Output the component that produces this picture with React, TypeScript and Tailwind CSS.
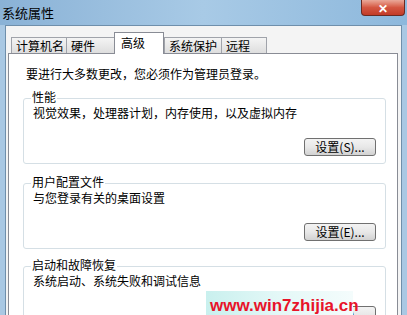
import React from "react";

const font = { fontFamily: '"Noto Sans CJK SC", "Noto Sans", sans-serif' };

const tabs = [
  { label: "计算机名", w: "w-[56px]" },
  { label: "硬件", w: "w-[49px]" },
  { label: "高级", w: "w-[50px]" },
  { label: "系统保护", w: "w-[58px]" },
  { label: "远程", w: "w-[46px]" },
];

function Group({
  title,
  desc,
  button,
  className,
}: {
  title: string;
  desc: string;
  button: string;
  className?: string;
}) {
  return (
    <div className={`relative ml-[14px] mr-[11px] ${className ?? ""}`}>
      <div className="absolute left-[8px] top-[-9px] bg-white px-[1px] text-[12px] leading-[16px] text-black">
        {title}
      </div>
      <div className="h-[66px] rounded-[3px] border border-[#d5dfe5] pl-[9px] pr-[9px] pt-[6px]">
        <div className="text-[12px] leading-[16px] text-black">{desc}</div>
        <div className="mt-[17px] flex justify-end">
          <button className="h-[18px] w-[72px] rounded-[3px] border border-[#707070] bg-gradient-to-b from-[#f3f3f3] via-[#e8e8e8] to-[#d2d2d2] text-[12px] leading-[14px] text-black">
            {button}
          </button>
        </div>
      </div>
    </div>
  );
}

export default function App() {
  return (
    <div className="h-[315px] w-[407px] overflow-hidden bg-[#a9c8e3]" style={font}>
      {/* title bar */}
      <div className="relative flex h-[25px] items-center bg-gradient-to-r from-[#8ab2d6] via-[#a8cae6] to-[#8db8dc] pl-[2px]">
        <span className="text-[13px] leading-[16px] text-black">系统属性</span>
        <div className="absolute right-[2px] top-0 flex h-[16px] w-[44px] items-center justify-center rounded-b-[4px] border border-t-0 border-[#6b2a22] bg-gradient-to-b from-[#e9a899] via-[#d45641] to-[#c23b28]">
          <span className="text-[12px] font-bold leading-none text-white">✕</span>
        </div>
      </div>
      {/* body */}
      <div className="mx-[5px] h-[290px] border-l border-r border-t border-[#6f8fab] bg-[#f4f4f4] pl-[2px] pr-[3px] pt-[6px]">
        <div className="flex h-[21px] items-end pl-[3px]">
          {tabs.map((t) =>
            t.label === "高级" ? (
              <div
                key={t.label}
                className={`relative z-10 -mb-px h-[22px] ${t.w} border border-b-0 border-[#898c95] bg-white pl-[6px] pt-[2px] text-[12px] leading-[16px] text-black`}
              >
                {t.label}
              </div>
            ) : (
              <div
                key={t.label}
                className={`h-[16px] ${t.w} -mr-px border border-b-0 border-[#a0a3aa] bg-gradient-to-b from-[#f4f4f4] to-[#dedede] pl-[4px] text-[12px] leading-[15px] text-black`}
              >
                {t.label}
              </div>
            )
          )}
        </div>
        <div className="h-[270px] border border-[#898c95] bg-white pt-[12px]">
          <div className="pl-[17px] text-[12px] leading-[16px] text-black">
            要进行大多数更改，您必须作为管理员登录。
          </div>
          <Group
            className="mt-[16px]"
            title="性能"
            desc="视觉效果，处理器计划，内存使用，以及虚拟内存"
            button="设置(S)..."
          />
          <Group
            className="mt-[19px]"
            title="用户配置文件"
            desc="与您登录有关的桌面设置"
            button="设置(E)..."
          />
          <div className="relative">
            <Group
              className="mt-[17px]"
              title="启动和故障恢复"
              desc="系统启动、系统失败和调试信息"
              button="设置(T)..."
            />
            <div
              className="absolute left-[197px] top-[25px] h-[26px] w-[147px] bg-gradient-to-r from-[#c9f0ee] via-[#e4f8f7] to-[#f4fcfc] pl-[4px] pt-[5px] text-[17px] font-bold leading-[20px] text-[#e8142a]"
              style={{ fontFamily: '"Liberation Sans", Arial, sans-serif' }}
            >
              www.win7zhijia.cn
            </div>
          </div>
        </div>
      </div>
    </div>
  );
}
